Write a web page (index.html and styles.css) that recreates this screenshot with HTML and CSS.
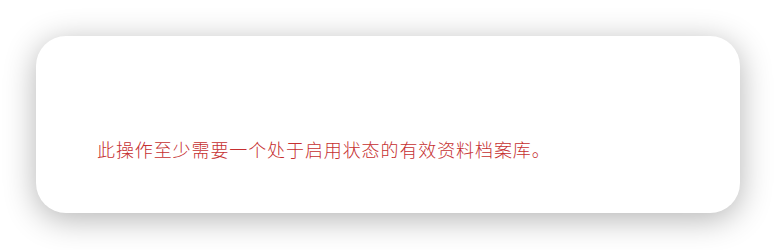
FILE: index.html
```html
<!DOCTYPE html>
<html lang="zh-CN">
<head>
<meta charset="utf-8">
<link rel="stylesheet" href="styles.css">
</head>
<body>
<div class="page">
  <div class="card">
    <p class="message">此操作至少需要一个处于启用状态的有效资料档案库。</p>
  </div>
</div>
</body>
</html>
```
FILE: styles.css
```css
html, body {
  margin: 0;
  padding: 0;
  background: #ffffff;
}
.page {
  box-sizing: border-box;
  height: 250px;
  padding: 36px 36px 0 36px;
  overflow: hidden;
}
.card {
  box-sizing: border-box;
  width: 704px;
  height: 177px;
  background: #ffffff;
  border-radius: 30px;
  box-shadow: 0 6px 32px rgba(0, 0, 0, 0.3);
  padding: 101px 0 0 61px;
}
.message {
  margin: 0;
  font-family: "Noto Sans CJK SC", "Noto Sans", sans-serif;
  font-size: 18px;
  font-weight: 300;
  line-height: 24px;
  letter-spacing: 0.9px;
  color: #c62f30;
}
```
